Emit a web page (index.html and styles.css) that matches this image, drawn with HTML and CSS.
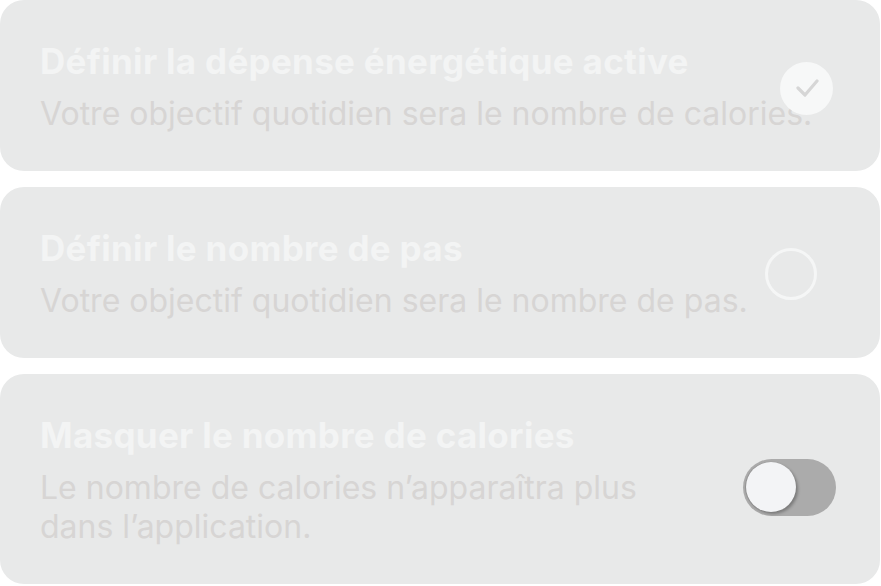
FILE: index.html
```html
<!DOCTYPE html>
<html lang="fr">
<head>
    <meta charset="UTF-8">
    <meta name="viewport" content="width=device-width, initial-scale=1.0">
    <title>Objectif quotidien</title>
    <link rel="stylesheet" href="styles.css">
</head>
<body>
    <div class="options">
        <div class="card">
            <div class="card-text">
                <div class="card-title">Définir la dépense énergétique active</div>
                <div class="card-desc">Votre objectif quotidien sera le nombre de calories.</div>
            </div>
            <!-- selected option: check sits over the end of the text -->
            <div class="check">
                <svg width="24" height="24" viewBox="0 0 24 24">
                    <polyline points="3,11 10,18 22,4" fill="none" stroke="#d6d6d6" stroke-width="3.2" stroke-linecap="round" stroke-linejoin="round"/>
                </svg>
            </div>
        </div>

        <div class="card">
            <div class="card-text">
                <div class="card-title">Définir le nombre de pas</div>
                <div class="card-desc">Votre objectif quotidien sera le nombre de pas.</div>
            </div>
            <div class="radio"></div>
        </div>

        <div class="card">
            <div class="card-text narrow">
                <div class="card-title">Masquer le nombre de calories</div>
                <div class="card-desc">Le nombre de calories n’apparaîtra plus dans l’application.</div>
            </div>
            <div class="switch">
                <div class="switch-knob"></div>
            </div>
        </div>
    </div>
</body>
</html>
```

FILE: styles.css
```css
body {
    margin: 0;
    background-color: #ffffff;
    font-family: Inter, Roboto, "Liberation Sans", sans-serif;
}
.options {
    width: 880px;
    display: flex;
    flex-direction: column;
    gap: 16px;
}
.card {
    position: relative;
    display: flex;
    align-items: center;
    padding: 41px 0 38px 40px;
    background-color: #e8e9e9;
    border-radius: 24px;
}
.card-text {
    flex: 1;
}
.card-text.narrow {
    max-width: 640px;
}
.card-title {
    font-size: 35px;
    line-height: 40px;
    font-weight: 700;
    letter-spacing: 0.3px;
    color: #f3f4f4;
    white-space: nowrap;
}
.card-desc {
    margin-top: 13px;
    font-size: 32px;
    line-height: 39px;
    color: #d7d5d4;
}
.check {
    position: absolute;
    left: 780px;
    top: 62px;
    width: 53px;
    height: 53px;
    border-radius: 50%;
    background-color: #f7f8f8;
    display: flex;
    align-items: center;
    justify-content: center;
}
.radio {
    width: 46px;
    height: 46px;
    margin-right: 63px;
    border: 3px solid #f5f6f6;
    border-radius: 50%;
    flex-shrink: 0;
}
.switch {
    position: relative;
    width: 93px;
    height: 57px;
    margin: 14px 44px 0 auto;
    background-color: #ababab;
    border-radius: 29px;
    flex-shrink: 0;
}
.switch-knob {
    position: absolute;
    left: 3px;
    top: 3px;
    width: 50px;
    height: 50px;
    border-radius: 50%;
    background-color: #f3f4f6;
    box-shadow: 2px 2px 3px rgba(0, 0, 0, 0.28), -1px 0 1px rgba(0, 0, 0, 0.15);
}
```
